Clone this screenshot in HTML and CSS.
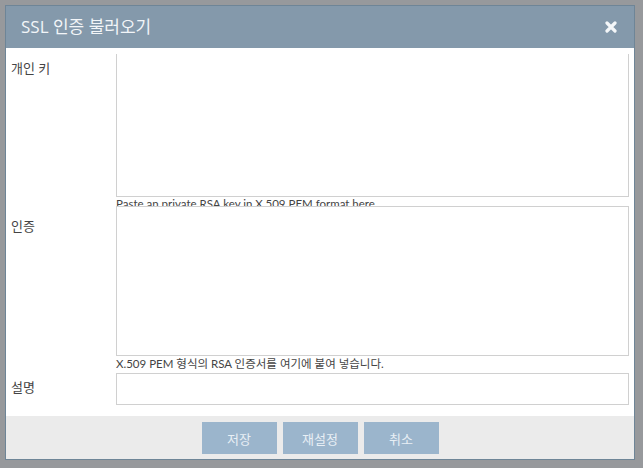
FILE: index.html
```html
<!DOCTYPE html>
<html lang="ko">
<head>
  <meta charset="UTF-8">
  <title>SSL 인증 불러오기</title>
  <link rel="stylesheet" href="styles.css">
</head>
<body>
  <!-- 대화상자 -->
  <div class="dialog">
    <div class="dialog-header">
      <span class="dialog-title">SSL 인증 불러오기</span>
      <span class="dialog-close" title="닫기">
        <svg width="12" height="12" viewBox="0 0 12 12">
          <path d="M2 2 L10 10 M10 2 L2 10" stroke="#f4f7f9" stroke-width="3.2" stroke-linecap="round"/>
        </svg>
      </span>
    </div>

    <div class="dialog-body">
      <div class="field">
        <label class="field-label">개인 키</label>
        <div class="field-control">
          <textarea class="text-box key-box"></textarea>
          <div class="field-hint hint-short">Paste an private RSA key in X.509 PEM format here</div>
        </div>
      </div>
      <div class="field">
        <label class="field-label label-low">인증</label>
        <div class="field-control">
          <textarea class="text-box cert-box"></textarea>
          <div class="field-hint">X.509 PEM 형식의 RSA 인증서를 여기에 붙여 넣습니다.</div>
        </div>
      </div>
      <div class="field">
        <label class="field-label">설명</label>
        <div class="field-control">
          <input type="text" class="text-box desc-box">
        </div>
      </div>
    </div>

    <div class="dialog-footer">
      <button type="button" class="btn">저장</button>
      <button type="button" class="btn">재설정</button>
      <button type="button" class="btn">취소</button>
    </div>
  </div>
</body>
</html>
```

FILE: styles.css
```css
/* 페이지 */
body {
  margin: 0;
  background-color: #97999c;
  font-family: "Open Sans", "Noto Sans CJK KR", sans-serif;
  color: #333;
}
/* 대화상자 */
.dialog {
  margin: 5px 0 0 5px;
  width: 628px;
  height: 453px;
  border: 1px solid #6e8597;
  background-color: #fff;
  display: flex;
  flex-direction: column;
}
/* 헤더 영역 */
.dialog-header {
  height: 42px;
  background-color: #8499ab;
  display: flex;
  align-items: center;
  justify-content: space-between;
  padding: 0 17px 0 15px;
}
.dialog-title {
  font-size: 17px;
  line-height: 42px;
  color: #f2f5f8;
}
.dialog-close {
  display: flex;
  cursor: pointer;
}
/* 입력 영역 */
.dialog-body {
  flex: 1;
  padding: 6px 5px 0 0;
}
.field {
  display: grid;
  grid-template-columns: 110px 1fr;
}
.field-label {
  font-size: 13px;
  line-height: 20px;
  padding: 4px 0 0 5px;
  color: #444;
}
.field-label.label-low {
  padding-top: 10px;
}
.text-box {
  display: block;
  position: relative;
  box-sizing: border-box;
  width: 100%;
  margin: 0;
  border: 1px solid #d0d0d0;
  background: #fff;
  outline: none;
  resize: none;
  font-family: inherit;
}
.key-box {
  height: 143px;
  border-top: none;
}
.cert-box {
  height: 150px;
}
.desc-box {
  height: 32px;
}
.field-hint {
  font-family: Lato, "Noto Sans CJK KR", sans-serif;
  font-size: 11.5px;
  line-height: 16px;
  height: 17px;
  color: #444;
  white-space: nowrap;
}
.field-hint.hint-short {
  height: 10px;
  margin-top: -1px;
}
/* 하단 버튼 영역 */
.dialog-footer {
  height: 43px;
  background-color: #ebebeb;
  display: flex;
  justify-content: center;
  align-items: flex-start;
  gap: 6px;
  padding-top: 6px;
  box-sizing: border-box;
}
.btn {
  width: 75px;
  height: 32px;
  border: none;
  background-color: #9bb5cc;
  color: #e8eff5;
  font-family: inherit;
  font-size: 13px;
  cursor: pointer;
}
```
